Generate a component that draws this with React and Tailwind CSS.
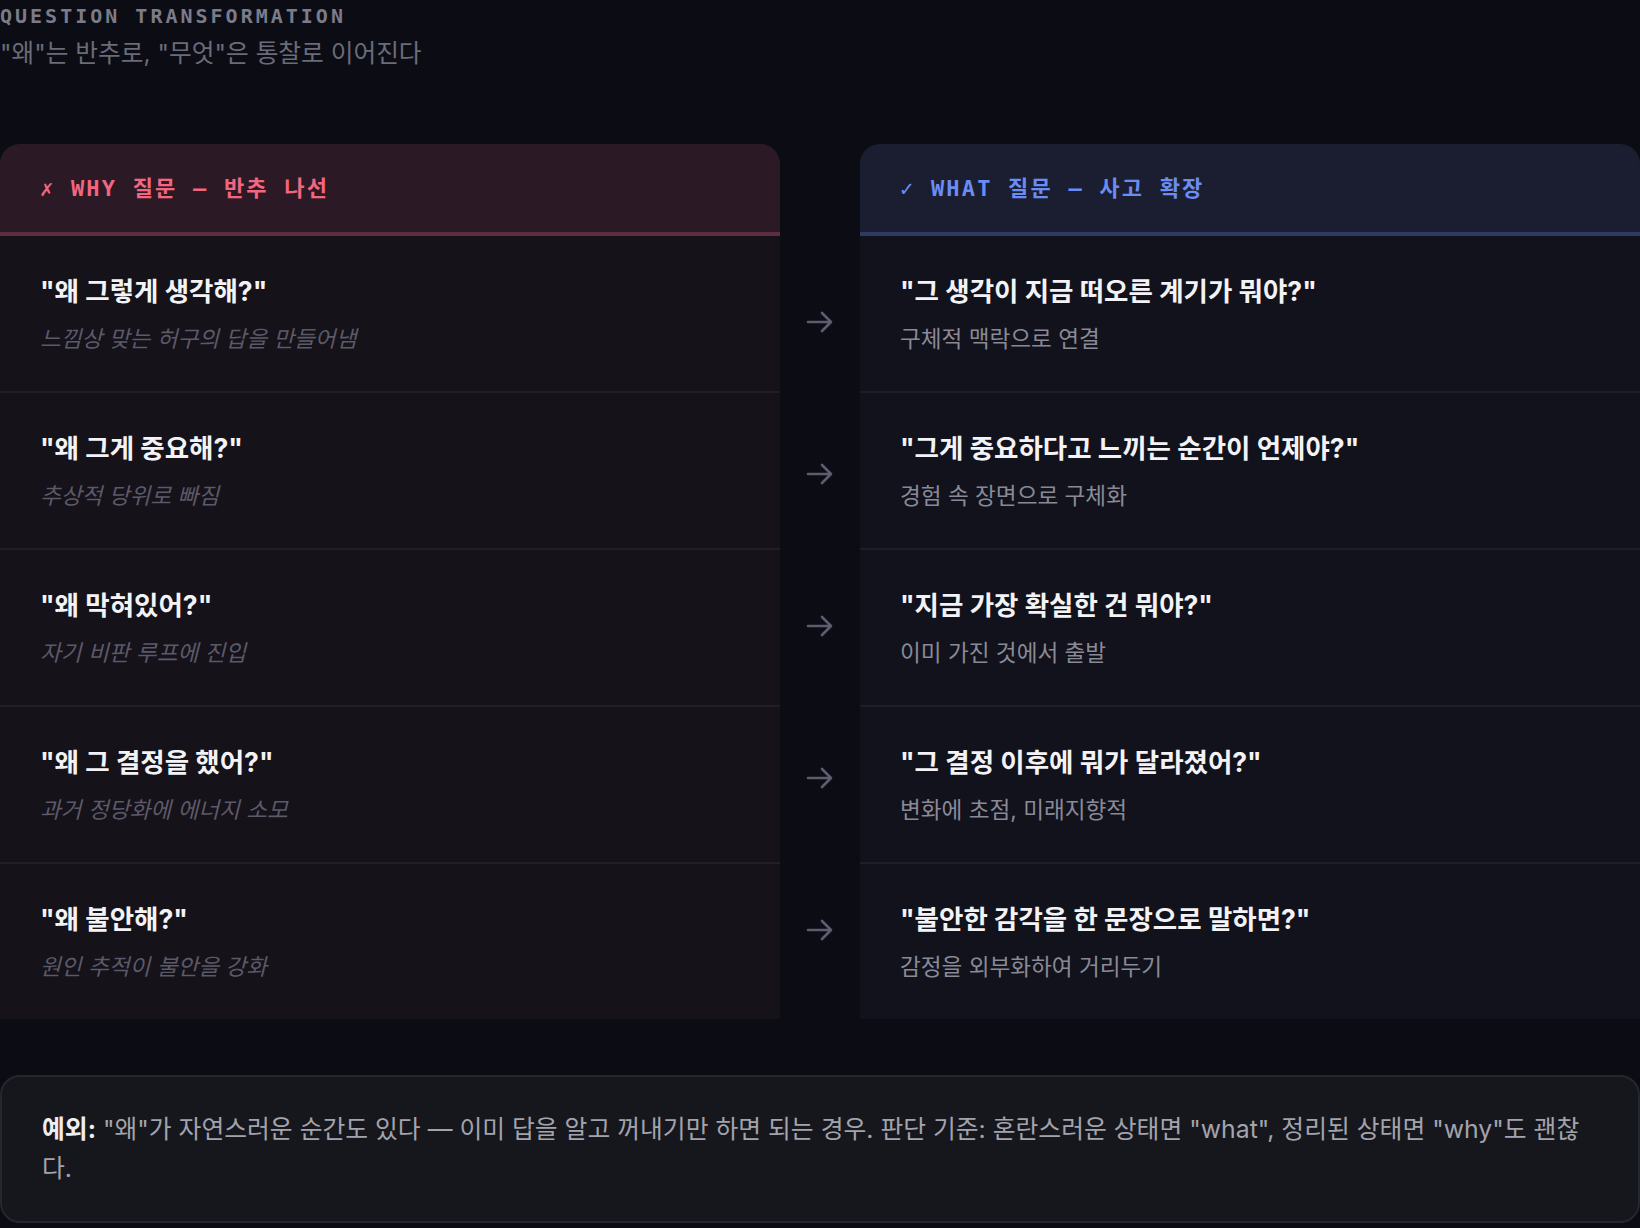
const pairs = [
  {
    why: '"왜 그렇게 생각해?"',
    whyNote: "느낌상 맞는 허구의 답을 만들어냄",
    what: '"그 생각이 지금 떠오른 계기가 뭐야?"',
    whatNote: "구체적 맥락으로 연결",
  },
  {
    why: '"왜 그게 중요해?"',
    whyNote: "추상적 당위로 빠짐",
    what: '"그게 중요하다고 느끼는 순간이 언제야?"',
    whatNote: "경험 속 장면으로 구체화",
  },
  {
    why: '"왜 막혀있어?"',
    whyNote: "자기 비판 루프에 진입",
    what: '"지금 가장 확실한 건 뭐야?"',
    whatNote: "이미 가진 것에서 출발",
  },
  {
    why: '"왜 그 결정을 했어?"',
    whyNote: "과거 정당화에 에너지 소모",
    what: '"그 결정 이후에 뭐가 달라졌어?"',
    whatNote: "변화에 초점, 미래지향적",
  },
  {
    why: '"왜 불안해?"',
    whyNote: "원인 추적이 불안을 강화",
    what: '"불안한 감각을 한 문장으로 말하면?"',
    whatNote: "감정을 외부화하여 거리두기",
  },
];

const Arrow = () => (
  <svg width="28" height="24" viewBox="0 0 28 24" fill="none">
    <path
      d="M2 12H25M16 3L25 12L16 21"
      stroke="#5d5d72"
      strokeWidth="2.6"
      strokeLinecap="round"
      strokeLinejoin="round"
    />
  </svg>
);

const Row = ({ title, note, last, tone }) => (
  <div
    className={
      "flex flex-col justify-center gap-[12px] px-[40px] pt-[2px] " +
      (last ? "h-[155px]" : "h-[157px] border-b-2 ") +
      (tone === "why" ? " border-[#221e26]" : " border-[#1c1e29]")
    }
  >
    <div className="text-[26.5px] leading-[36px] font-bold text-[#f3f3f6]">{title}</div>
    {tone === "why" ? (
      <div className="text-[22.6px] leading-[36px] italic text-[#5c5969]">{note}</div>
    ) : (
      <div className="text-[22.6px] leading-[36px] text-[#8a8a97]">{note}</div>
    )}
  </div>
);

export default function App() {
  return (
    <div className="min-h-screen bg-[#0c0d14] font-['Inter','Noto_Sans_CJK_KR',sans-serif]">
      <div className="font-['DejaVu_Sans_Mono','Noto_Sans_CJK_KR',monospace] text-[20px] leading-[32px] font-bold tracking-[3px] text-[#7b7b89]">
        QUESTION TRANSFORMATION
      </div>
      <div className="mt-[5px] text-[24.7px] leading-[32px] text-[#6b6b79]">
        "왜"는 반추로, "무엇"은 통찰로 이어진다
      </div>

      <div className="mt-[75px] grid grid-cols-[780px_80px_780px]">
        <div className="rounded-t-[20px] overflow-hidden bg-[#151219]">
          <div className="h-[92px] flex items-center px-[40px] bg-[#2b1a25] border-b-4 border-[#5e2e3e] font-['DejaVu_Sans_Mono','Noto_Sans_CJK_KR',monospace] text-[22px] font-bold tracking-[2.2px] text-[#f2667f]">
            ✗ WHY 질문 — 반추 나선
          </div>
          {pairs.map((p, i) => (
            <Row key={i} title={p.why} note={p.whyNote} last={i === pairs.length - 1} tone="why" />
          ))}
        </div>

        <div className="flex flex-col pt-[102px]">
          {pairs.map((p, i) => (
            <div key={i} className="h-[152px] flex items-center justify-center">
              <Arrow />
            </div>
          ))}
        </div>

        <div className="rounded-t-[20px] overflow-hidden bg-[#11121c]">
          <div className="h-[92px] flex items-center px-[40px] bg-[#1a1e30] border-b-4 border-[#2e3b64] font-['DejaVu_Sans_Mono','Noto_Sans_CJK_KR',monospace] text-[22px] font-bold tracking-[2.2px] text-[#6b8cf2]">
            <span className="font-normal">✓</span>&nbsp;WHAT 질문 — 사고 확장
          </div>
          {pairs.map((p, i) => (
            <Row key={i} title={p.what} note={p.whatNote} last={i === pairs.length - 1} tone="what" />
          ))}
        </div>
      </div>

      <div className="mt-[56px] rounded-[20px] border-2 border-[#25272e] bg-[#16171c] px-[40px] py-[33px] text-[24.8px] leading-[39px] text-[#a3a3ae]">
        <span className="font-bold text-[#eeeef2]">예외:</span> "왜"가 자연스러운 순간도 있다 — 이미 답을 알고 꺼내기만
        하면 되는 경우. 판단 기준: 혼란스러운 상태면 "what", 정리된 상태면 "why"도 괜찮
        <br />
        다.
      </div>
    </div>
  );
}
